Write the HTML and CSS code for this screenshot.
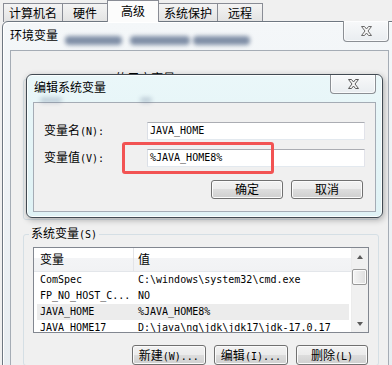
FILE: index.html
```html
<!DOCTYPE html>
<html lang="zh-CN">
<head>
  <meta charset="UTF-8">
  <meta name="viewport" content="width=device-width, initial-scale=1.0">
  <title>环境变量</title>
  <link rel="stylesheet" href="styles.css">
</head>
<body>
  <div class="tabs">
    <div class="tab">计算机名</div>
    <div class="tab">硬件</div>
    <div class="tab active">高级</div>
    <div class="tab">系统保护</div>
    <div class="tab">远程</div>
  </div>

  <div class="win env">
    <div class="titlebar">
      <span class="title">环境变量</span>
      <span class="blur" style="left:62px;width:57px"></span>
      <span class="blur" style="left:127px;width:60px"></span>
      <span class="blur" style="left:190px;width:57px"></span>
      <div class="close">
        <svg width="11" height="10" viewBox="0 0 11 10"><path d="M0.5 0.5h3l2 2.5 2-2.5h3l-3.5 4.5 3.5 4.5h-3l-2-2.5-2 2.5h-3l3.5-4.5z" fill="#f6f6f6" stroke="#6a6a6a"/></svg>
      </div>
    </div>
    <div class="client">
      <fieldset class="group user">
        <legend><span class="m">Administrator </span>的用户变量<span class="m">(U)</span></legend>
      </fieldset>
      <fieldset class="group sys">
        <legend>系统变量<span class="m">(S)</span></legend>
        <div class="list">
          <div class="cols">
            <div class="head">
              <div class="hc1">变量</div>
              <div class="hc2">值</div>
            </div>
            <div class="row"><div class="c1 m">ComSpec</div><div class="c2 m">C:\windows\system32\cmd.exe</div></div>
            <div class="row"><div class="c1 m">FP_NO_HOST_C...</div><div class="c2 m">NO</div></div>
            <div class="row sel"><div class="c1 m">JAVA_HOME</div><div class="c2 m">%JAVA_HOME8%</div></div>
            <div class="row"><div class="c1 m">JAVA_HOME17</div><div class="c2 m">D:\java\ng\jdk\jdk17\jdk-17.0.17</div></div>
          </div>
          <div class="vscroll">
            <div class="sb-btn"><span class="arr up"></span></div>
            <div class="thumb"></div>
            <div class="track"></div>
            <div class="sb-btn"><span class="arr down"></span></div>
          </div>
        </div>
        <div class="btns">
          <div class="btn">新建<span class="m">(W)...</span></div>
          <div class="btn">编辑<span class="m">(I)...</span></div>
          <div class="btn">删除<span class="m">(L)</span></div>
        </div>
      </fieldset>
    </div>
  </div>

  <div class="win dlg">
    <div class="titlebar">
      <span class="title">编辑系统变量</span>
      <span class="blur faint" style="left:13px;width:22px"></span>
      <span class="blur faint" style="left:113px;width:12px"></span>
      <div class="close">
        <svg width="11" height="10" viewBox="0 0 11 10"><path d="M0.5 0.5h3l2 2.5 2-2.5h3l-3.5 4.5 3.5 4.5h-3l-2-2.5-2 2.5h-3l3.5-4.5z" fill="#f6f6f6" stroke="#5a5a5a"/></svg>
      </div>
    </div>
    <div class="client">
      <div class="form">
        <div class="lbl">变量名<span class="m">(N):</span></div>
        <div class="field m">JAVA_HOME</div>
        <div class="lbl">变量值<span class="m">(V):</span></div>
        <div class="field m">%JAVA_HOME8%</div>
      </div>
      <div class="btns">
        <div class="btn">确定</div>
        <div class="btn">取消</div>
      </div>
    </div>
  </div>

  <div class="mark"></div>
</body>
</html>
```

FILE: styles.css
```css
* {
  box-sizing: border-box;
}

body {
  margin: 0;
  width: 392px;
  height: 365px;
  overflow: hidden;
  position: relative;
  background: #f0f0f0;
  font: 12px/14px "Noto Sans CJK SC", sans-serif;
  color: #000;
}

.m {
  font-family: "DejaVu Sans Mono", monospace;
  font-size: 10px;
}

/* tabs of the system properties sheet */
.tabs {
  display: flex;
  align-items: flex-end;
  height: 22px;
  padding-left: 3px;
}

.tab {
  height: 19px;
  min-width: 46px;
  padding: 0 5px;
  border: 1px solid #898c95;
  border-bottom: 0;
  margin-right: -1px;
  background: linear-gradient(#f4f4f4, #e2e2e2);
  line-height: 18px;
  text-align: center;
}

.tab.active {
  height: 22px;
  min-width: 52px;
  background: #fcfcfc;
  position: relative;
  z-index: 1;
  line-height: 20px;
}

/* windows */
.win {
  position: absolute;
  border: 1px solid #6e7781;
}

.titlebar .title {
  display: inline-block;
}

.blur {
  position: absolute;
  top: 14px;
  height: 9px;
  border-radius: 4px;
  background: #4f6384;
  filter: blur(2px);
  opacity: 0.7;
}

.blur.faint {
  top: 22px;
  height: 6px;
  opacity: 0.25;
}

.close {
  position: absolute;
  top: -1px;
  width: 46px;
  height: 21px;
  border: 1px solid #8b8f94;
  border-top: 0;
  border-radius: 0 0 4px 4px;
  background: linear-gradient(#f8f9fa, #e9edf0);
  box-shadow: inset 0 0 0 1px rgba(255, 255, 255, 0.7);
  display: flex;
  align-items: center;
  justify-content: center;
}

.client {
  background: #f0f0f0;
  border: 1px solid #a5acb5;
}

.env {
  left: 2px;
  top: 21px;
  width: 396px;
  height: 350px;
  border-radius: 6px 6px 0 0;
  padding: 0 8px 0 7px;
  background: linear-gradient(#f4f7f9, #e8edf1);
  box-shadow: inset 1px 1px 0 #fff;
}

.env .titlebar {
  height: 28px;
  line-height: 26px;
}

.env .close {
  right: 8px;
}

.env .client {
  height: 330px;
  border-bottom: 0;
  padding: 20px 9px 0 12px;
}

.group {
  margin: 0;
  min-width: 0;
  padding: 5px 9px 0;
  border: 1px solid #d5dfe5;
  border-radius: 3px;
}

.group legend {
  padding: 0 2px;
  margin-left: -4px;
  line-height: 14px;
}

.group.user {
  height: 149px;
  margin-bottom: 6px;
}

/* list view */
.list {
  display: flex;
  height: 86px;
  border: 1px solid #828790;
  background: #fff;
}

.cols {
  flex: 1;
  min-width: 0;
  overflow: hidden;
}

.head {
  display: flex;
  height: 24px;
  line-height: 22px;
  background: linear-gradient(#ffffff 45%, #f3f4f6 45%, #f1f2f4);
  border-bottom: 1px solid #e3e6ea;
}

.hc1 {
  width: 100px;
  padding-left: 6px;
  border-right: 1px solid #e3e4e8;
}

.hc2 {
  padding-left: 4px;
}

.row {
  display: flex;
  height: 16px;
  line-height: 16px;
  margin: 0 2px 0 3px;
  white-space: nowrap;
}

.row.sel {
  background: #ececec;
}

.c1 {
  width: 97px;
  flex: none;
  padding-left: 3px;
}

.c2 {
  padding-left: 4px;
}

.vscroll {
  width: 17px;
  display: flex;
  flex-direction: column;
  background: #f0f0f0;
  border-left: 1px solid #ececec;
}

.sb-btn {
  height: 17px;
  display: flex;
  align-items: center;
  justify-content: center;
}

.arr {
  width: 0;
  height: 0;
  border-left: 3.5px solid transparent;
  border-right: 3.5px solid transparent;
}

.arr.up {
  border-bottom: 4px solid #5b5b5b;
}

.arr.down {
  border-top: 4px solid #5b5b5b;
}

.thumb {
  height: 16px;
  margin: 4px 1px 0 0;
  border: 1px solid #979797;
  border-radius: 2px;
  background: linear-gradient(90deg, #f5f5f5, #dedede);
  box-shadow: inset 0 0 0 1px #fbfbfb;
}

.track {
  flex: 1;
}

/* buttons */
.btns {
  display: flex;
  justify-content: flex-end;
  gap: 8px;
}

.btn {
  height: 20px;
  min-width: 72px;
  padding: 0 6px;
  border: 1px solid #707070;
  border-radius: 3px;
  background: linear-gradient(#f2f2f2, #ebebeb 50%, #dddddd 50%, #cfcfcf);
  box-shadow: inset 0 0 0 1px #fbfbfb;
  line-height: 17px;
  text-align: center;
}

.sys .btns {
  margin-top: 12px;
  padding-right: 1px;
}

/* edit dialog */
.dlg {
  left: 26px;
  top: 74px;
  width: 357px;
  height: 144px;
  border-color: #414a52;
  border-radius: 6px;
  padding: 0 6px 5px;
  background: linear-gradient(#eaf7f9, #dff2f5);
  box-shadow: inset 0 0 0 1px rgba(255, 255, 255, 0.8), 1px 2px 6px rgba(0, 0, 0, 0.3);
}

.dlg .titlebar {
  height: 27px;
  line-height: 24px;
  padding-left: 1px;
}

.dlg .close {
  top: 0;
  right: 6px;
  height: 19px;
}

.dlg .client {
  height: 110px;
  padding: 19px 10px 0;
}

.form {
  display: grid;
  grid-template-columns: 103px 218px;
  row-gap: 9px;
  align-items: center;
}

.field {
  height: 18px;
  padding-left: 2px;
  border: 1px solid;
  border-color: #abadb3 #e2e3ea #e3e9ef #dbdfe6;
  background: #fff;
  line-height: 16px;
}

.dlg .btns {
  margin-top: 13px;
  padding-right: 2px;
}

.dlg .btn {
  height: 19px;
  line-height: 16px;
}

/* red highlight drawn over the value field */
.mark {
  position: absolute;
  left: 122px;
  top: 142px;
  width: 152px;
  height: 32px;
  border: 3px solid #f25353;
  border-radius: 3px;
}
```
